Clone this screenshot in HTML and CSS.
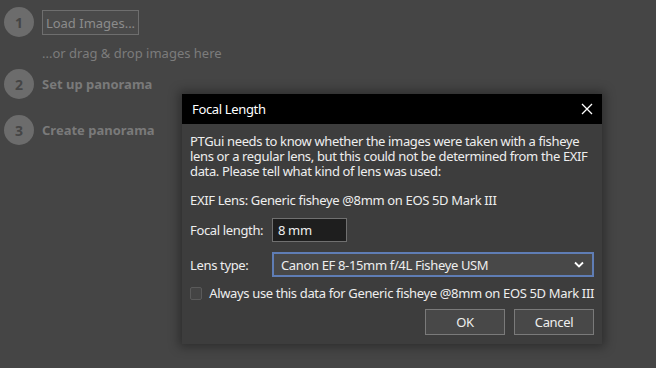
FILE: index.html
```html
<!DOCTYPE html>
<html lang="en">

<head>
    <meta charset="UTF-8">
    <title>PTGui</title>
    <link rel="stylesheet" href="styles.css">
</head>

<body>

    <div class="steps">
        <div class="step">
            <span class="num">1</span>
            <button class="load-btn">Load Images...</button>
        </div>
        <div class="drop-hint">...or drag &amp; drop images here</div>
        <div class="step">
            <span class="num">2</span>
            <span class="step-label">Set up panorama</span>
        </div>
        <div class="step">
            <span class="num">3</span>
            <span class="step-label">Create panorama</span>
        </div>
    </div>

    <div class="dialog">
        <div class="dlg-title">
            <span>Focal Length</span>
            <svg class="close" width="12" height="12" viewBox="0 0 12 12">
                <path d="M1 1 L11 11 M11 1 L1 11" stroke="#fff" stroke-width="1.3" fill="none" />
            </svg>
        </div>
        <div class="dlg-body">
            <p class="msg">PTGui needs to know whether the images were taken with a fisheye lens or a regular lens, but this could not be determined from the EXIF data. Please tell what kind of lens was used:</p>
            <p class="exif">EXIF Lens: Generic fisheye @8mm on EOS 5D Mark III</p>

            <div class="field">
                <label>Focal length:</label>
                <div class="input">8 mm</div>
            </div>
            <div class="field">
                <label>Lens type:</label>
                <div class="select">
                    <span>Canon EF 8-15mm f/4L Fisheye USM</span>
                    <svg width="10" height="7" viewBox="0 0 10 7">
                        <path d="M1 1.5 L5 5.5 L9 1.5" stroke="#fff" stroke-width="1.8" fill="none" />
                    </svg>
                </div>
            </div>

            <div class="check-row">
                <span class="checkbox"></span>
                <span>Always use this data for Generic fisheye @8mm on EOS 5D Mark III</span>
            </div>

            <div class="buttons">
                <button class="dlg-btn">OK</button>
                <button class="dlg-btn">Cancel</button>
            </div>
        </div>
    </div>

</body>

</html>
```

FILE: styles.css
```css
body {
    margin: 0;
    height: 368px;
    background-color: #454545;
    font-family: "Noto Sans", "Open Sans", sans-serif;
    font-size: 13px;
    color: #eee;
    overflow: hidden;
}

.steps {
    padding: 7px 0 0 4px;
    display: flex;
    flex-direction: column;
}

.step {
    display: flex;
    align-items: center;
    gap: 8px;
    height: 30px;
}

.num {
    width: 30px;
    height: 30px;
    border-radius: 50%;
    background: #6c6c6c;
    color: #454545;
    font-weight: bold;
    font-size: 14px;
    display: flex;
    align-items: center;
    justify-content: center;
}

.load-btn {
    height: 25px;
    width: 97px;
    margin-top: 1px;
    background: #4a4a4a;
    border: 1px solid #6e6e6e;
    color: #8c8c8c;
    font-family: inherit;
    font-size: 13px;
    padding: 0;
}

.drop-hint {
    color: #7c7c7c;
    padding-left: 38px;
    height: 32px;
    line-height: 32px;
}

.step-label {
    color: #7a7a7a;
    font-weight: bold;
}

.step + .step {
    margin-top: 16px;
}

.dialog {
    position: absolute;
    left: 182px;
    top: 94px;
    width: 420px;
    height: 250px;
    background: #3d3d3d;
    box-shadow: 0 0 10px 3px rgba(0, 0, 0, 0.35);
    letter-spacing: -0.35px;
}

.dlg-title {
    height: 30px;
    background: #000;
    color: #fff;
    display: flex;
    align-items: center;
    justify-content: space-between;
    padding: 0 9px 0 10px;
}

.dlg-body {
    padding: 10px 8px 0 8px;
}

.msg {
    margin: 0;
    line-height: 15px;
    width: 400px;
}

.exif {
    margin: 14px 0 0 0;
    line-height: 15px;
}

.field {
    display: flex;
    align-items: center;
    margin-top: 10px;
}

.field label {
    width: 82px;
}

.input {
    height: 24px;
    line-height: 22px;
    padding-left: 5px;
    background: #1e1e1e;
    border: 1px solid #707070;
    box-sizing: border-box;
    width: 75px;
}

.select {
    width: 322px;
    height: 25px;
    box-sizing: border-box;
    border: 2px solid #5f7db5;
    background: #484848;
    display: flex;
    align-items: center;
    justify-content: space-between;
    padding: 0 8px 0 7px;
}

.check-row {
    display: flex;
    align-items: center;
    gap: 7px;
    margin-top: 7px;
    height: 18px;
    white-space: nowrap;
}

.checkbox {
    width: 11px;
    height: 11px;
    border: 1px solid #5a5a5a;
    background: #444;
    border-radius: 2px;
}

.buttons {
    display: flex;
    justify-content: flex-end;
    gap: 9px;
    margin-top: 7px;
}

.dlg-btn {
    width: 80px;
    height: 26px;
    background: #484848;
    border: 1px solid #7a7a7a;
    color: #eee;
    font-family: inherit;
    font-size: 13px;
    letter-spacing: inherit;
}
```
